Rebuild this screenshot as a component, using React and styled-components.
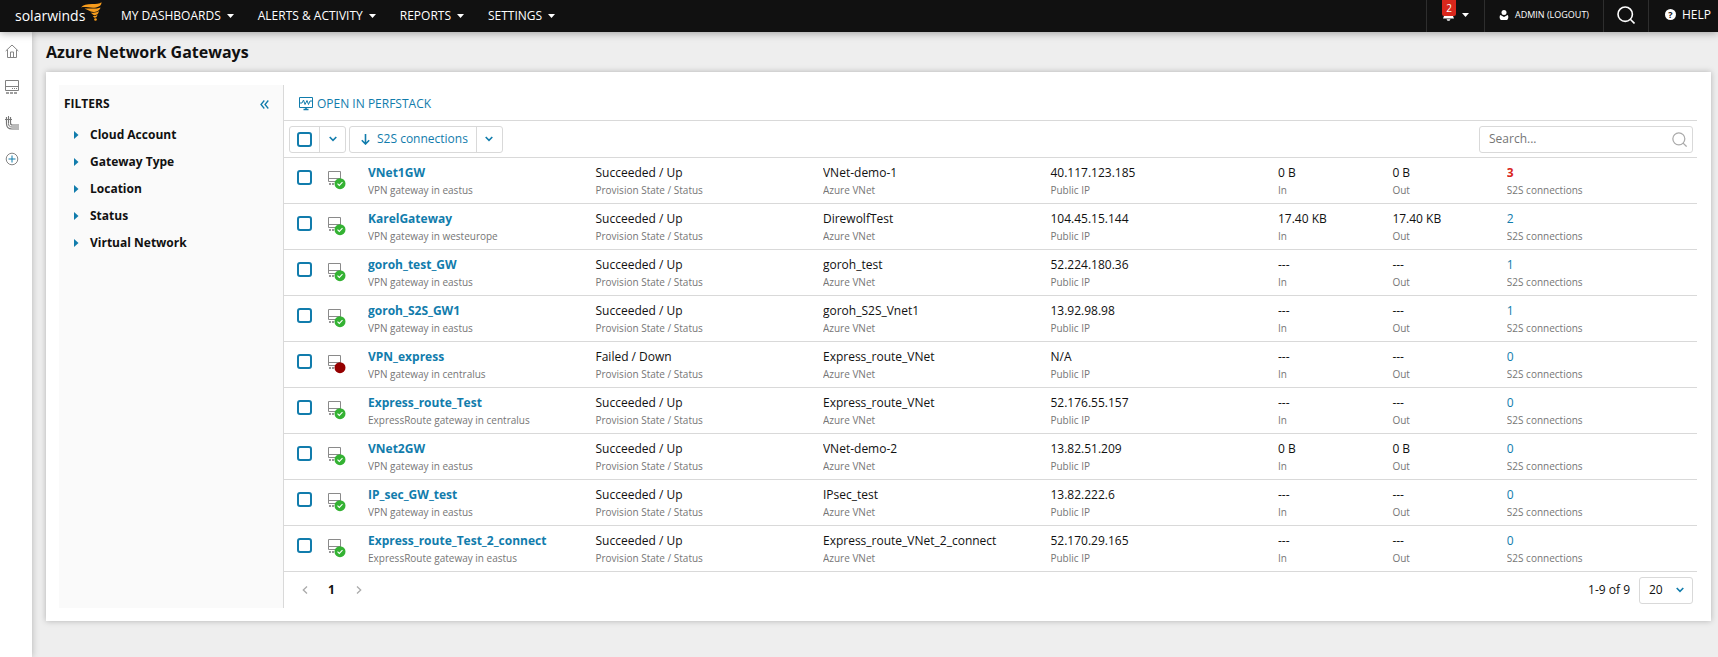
import React from 'react'
import styled, { createGlobalStyle } from 'styled-components'

const colors = {
  black: '#111',
  blue: '#117cac',
  green: '#34b233',
  down: '#950000',
  red: '#d9271c',
  line: '#d9d9d9',
  muted: '#767676',
  text: '#111',
}

const gateways = [
  { name: 'VNet1GW', kind: 'VPN gateway in eastus', state: 'Succeeded / Up', vnet: 'VNet-demo-1', ip: '40.117.123.185', in: '0 B', out: '0 B', s2s: 3, alert: true },
  { name: 'KarelGateway', kind: 'VPN gateway in westeurope', state: 'Succeeded / Up', vnet: 'DirewolfTest', ip: '104.45.15.144', in: '17.40 KB', out: '17.40 KB', s2s: 2 },
  { name: 'goroh_test_GW', kind: 'VPN gateway in eastus', state: 'Succeeded / Up', vnet: 'goroh_test', ip: '52.224.180.36', in: '---', out: '---', s2s: 1 },
  { name: 'goroh_S2S_GW1', kind: 'VPN gateway in eastus', state: 'Succeeded / Up', vnet: 'goroh_S2S_Vnet1', ip: '13.92.98.98', in: '---', out: '---', s2s: 1 },
  { name: 'VPN_express', kind: 'VPN gateway in centralus', state: 'Failed / Down', vnet: 'Express_route_VNet', ip: 'N/A', in: '---', out: '---', s2s: 0, down: true },
  { name: 'Express_route_Test', kind: 'ExpressRoute gateway in centralus', state: 'Succeeded / Up', vnet: 'Express_route_VNet', ip: '52.176.55.157', in: '---', out: '---', s2s: 0 },
  { name: 'VNet2GW', kind: 'VPN gateway in eastus', state: 'Succeeded / Up', vnet: 'VNet-demo-2', ip: '13.82.51.209', in: '0 B', out: '0 B', s2s: 0 },
  { name: 'IP_sec_GW_test', kind: 'VPN gateway in eastus', state: 'Succeeded / Up', vnet: 'IPsec_test', ip: '13.82.222.6', in: '---', out: '---', s2s: 0 },
  { name: 'Express_route_Test_2_connect', kind: 'ExpressRoute gateway in eastus', state: 'Succeeded / Up', vnet: 'Express_route_VNet_2_connect', ip: '52.170.29.165', in: '---', out: '---', s2s: 0 },
]

const menus = ['MY DASHBOARDS', 'ALERTS & ACTIVITY', 'REPORTS', 'SETTINGS']
const filters = ['Cloud Account', 'Gateway Type', 'Location', 'Status', 'Virtual Network']

const GlobalStyle = createGlobalStyle`
  * {
    box-sizing: border-box;
  }

  body {
    background: #eee;
    color: ${colors.text};
    font: 12px/18px "Open Sans", "Noto Sans", sans-serif;
    margin: 0;
  }

  button, input, select {
    color: inherit;
    font: inherit;
    margin: 0;
  }

  button {
    background: none;
    border: 0;
    cursor: pointer;
    padding: 0;
  }

  a {
    color: ${colors.blue};
    text-decoration: none;
  }

  svg {
    display: block;
    flex: none;
  }
`

const Page = styled.div`
  display: flex;
  flex-direction: column;
  min-height: 100vh;
`

const TopBar = styled.header`
  background: ${colors.black};
  box-shadow: 0 1px 8px rgba(0, 0, 0, 0.35);
  color: #fff;
  display: flex;
  height: 32px;
  justify-content: space-between;
  position: relative;
  z-index: 2;
`

const Brand = styled.a`
  color: #fff;
  display: flex;
  font-size: 14px;
  line-height: 32px;
  padding-left: 15px;
  width: 109px;

  > svg {
    margin: 2px 0 0 -4px;
  }
`

const Menu = styled.nav`
  display: flex;
  flex: 1;
`

const MenuButton = styled.button`
  align-items: center;
  display: flex;
  gap: 6px;
  height: 31px;
  padding: 0 12px;
`

const Tools = styled.div`
  display: flex;
`

const Tool = styled.button`
  align-items: center;
  border-left: 1px solid #2e2e2e;
  display: flex;
  font-size: ${(props) => (props.$small ? '9px' : '12px')};
  gap: 6px;
  padding: 0 ${(props) => props.$pad}px 3px;
`

const BellBox = styled.span`
  align-items: center;
  align-self: flex-start;
  display: flex;
  flex-direction: column;
`

const Count = styled.span`
  background: ${colors.red};
  border-radius: 0 0 2px 2px;
  font-size: 10px;
  line-height: 16px;
  text-align: center;
  width: 14px;
`

const Body = styled.div`
  display: flex;
  flex: 1;
`

const Rail = styled.nav`
  background: #fff;
  box-shadow: 0 0 7px rgba(0, 0, 0, 0.25);
  display: flex;
  flex-direction: column;
  gap: 22px;
  padding: 12px 0 0 5px;
  width: 32px;
`

const RailButton = styled.button`
  height: 14px;
  width: 14px;
`

const Main = styled.main`
  flex: 1;
  min-width: 0;
  padding: 0 7px 36px 14px;
`

const Title = styled.h1`
  font-size: 16px;
  font-weight: 700;
  line-height: 40px;
  margin: 0;
`

const Card = styled.section`
  background: #fff;
  box-shadow: 0 0 6px rgba(0, 0, 0, 0.25);
  display: flex;
  padding: 13px 14px 13px 13px;
`

const Filters = styled.aside`
  background: #fafafa;
  border-right: 1px solid ${colors.line};
  flex: none;
  width: 225px;
`

const FiltersHead = styled.div`
  align-items: center;
  display: flex;
  justify-content: space-between;
  padding: 10px 14px 8px 5px;
`

const FiltersTitle = styled.h2`
  font-size: 12px;
  font-weight: 700;
  line-height: 18px;
  margin: 0;
`

const FilterButton = styled.button`
  align-items: center;
  display: flex;
  font-weight: 700;
  gap: 11px;
  height: 27px;
  padding-left: 15px;
  width: 100%;
`

const Content = styled.div`
  flex: 1;
  min-width: 0;
`

const ActionBar = styled.div`
  border-bottom: 1px solid ${colors.line};
  display: flex;
  height: 36px;
  padding: 2px 0 0 15px;
`

const ActionButton = styled.button`
  align-items: center;
  color: ${colors.blue};
  display: flex;
  gap: 4px;
`

const ToolRow = styled.div`
  align-items: center;
  border-bottom: ${(props) => (props.$lined ? `1px solid ${colors.line}` : '0')};
  display: flex;
  gap: 3px;
  height: ${(props) => (props.$lined ? '37px' : '36px')};
  padding: 0 4px 0 5px;
`

const Split = styled.div`
  border: 1px solid ${colors.line};
  border-radius: 3px;
  color: ${colors.blue};
  display: flex;
  height: 27px;
`

const SplitPart = styled.label`
  align-items: center;
  display: flex;
  padding: 0 7px;
`

const SplitButton = styled.button`
  align-items: center;
  display: flex;
  gap: 7px;
  padding: 0 8px 0 11px;
`

const SplitArrow = styled.button`
  align-items: center;
  border-left: 1px solid ${colors.line};
  display: flex;
  justify-content: center;
  width: 26px;
`

const CheckBox = styled.input.attrs({ type: 'checkbox' })`
  appearance: none;
  background: #fff;
  border: 2px solid ${colors.blue};
  border-radius: 3px;
  display: block;
  height: 15px;
  width: 15px;
`

const SearchBox = styled.label`
  align-items: center;
  border: 1px solid ${colors.line};
  border-radius: 3px;
  color: #aaa;
  display: flex;
  height: 27px;
  margin-left: auto;
  padding: 0 5px 0 9px;
  width: 214px;
`

const SearchInput = styled.input`
  background: none;
  border: 0;
  color: ${colors.text};
  flex: 1;
  min-width: 0;
  outline: none;
  padding: 0;

  &::placeholder {
    color: ${colors.muted};
    opacity: 1;
  }
`

const Table = styled.table`
  border-collapse: separate;
  border-spacing: 0;
  table-layout: fixed;
  width: 100%;
`

const Column = styled.col`
  width: ${(props) => props.$width};
`

const Cell = styled.td`
  border-bottom: 1px solid ${colors.line};
  height: 46px;
  overflow: hidden;
  padding: 6px 0 5px;
  vertical-align: top;
  white-space: nowrap;
`

const ControlCell = styled(Cell)`
  padding: 12px 0 0 13px;
`

const IconCell = styled(Cell)`
  padding: 12px 0 0;
`

const Value = styled.div`
  line-height: 18px;
`

const NameLink = styled.a`
  font-weight: 700;
`

const CountLink = styled.a`
  color: ${(props) => (props.$alert ? colors.red : colors.blue)};
  font-weight: ${(props) => (props.$alert ? 700 : 400)};
`

const Caption = styled.div`
  color: ${colors.muted};
  font-size: 10px;
  line-height: 16px;
`

const Pager = styled.nav`
  display: flex;
  padding-left: 2px;
`

const PageButton = styled.button`
  align-items: center;
  color: ${(props) => (props.$current ? colors.text : '#aaa')};
  display: flex;
  font-weight: 700;
  height: 27px;
  justify-content: center;
  width: 27px;
`

const Range = styled.span`
  margin-left: auto;
`

const SizeBox = styled.label`
  align-items: center;
  border: 1px solid ${colors.line};
  border-radius: 3px;
  color: ${colors.blue};
  display: grid;
  height: 27px;
  margin-left: 6px;
  width: 54px;

  > * {
    grid-area: 1 / 1;
  }

  > svg {
    justify-self: end;
    margin-right: 8px;
    pointer-events: none;
  }
`

const SizeSelect = styled.select`
  appearance: none;
  background: none;
  border: 0;
  color: ${colors.text};
  height: 25px;
  outline: none;
  padding: 0 9px;
  width: 100%;
`

const HelpMark = styled.span`
  background: #fff;
  border-radius: 50%;
  color: ${colors.black};
  font-size: 9px;
  font-weight: 700;
  height: 11px;
  line-height: 11px;
  margin-left: 9px;
  text-align: center;
  width: 11px;
`

function Caret () {
  return <svg width="7" height="4" fill="#fff"><path d="M0 0h7L3.500 4z" /></svg>
}

function Chevron () {
  return (
    <svg width="8" height="6" fill="none" stroke="currentColor" strokeWidth="1.600">
      <path d="M.7 1 4 4.300 7.300 1" />
    </svg>
  )
}

function PageArrow ({ next }) {
  return (
    <svg width="6" height="8" fill="none" stroke="currentColor" strokeWidth="1.300">
      <path d={next ? 'M1 .5 4.700 4 1 7.500' : 'M5 .5 1.300 4 5 7.500'} />
    </svg>
  )
}

function Magnifier ({ size, weight }) {
  return (
    <svg width={size} height={size} viewBox="0 0 18 18" fill="none" stroke="currentColor" strokeWidth={weight}>
      <circle cx="8.200" cy="8.200" r="7.200" />
      <path d="m13.300 13.300 4.200 4.200" />
    </svg>
  )
}

function LogoMark () {
  return (
    <svg width="22" height="20" viewBox="0 0 22 20" fill="#f99d1c">
      <path d="M0 5.500C2 2.800 6 2 11 2 15 2 18.500 1.800 20.500.3c.2 3-2.500 5-7 5.400C8.500 6.100 4 4.300 0 5.500z" />
      <path d="M3.500 6.700C8 6 14 7.600 19.500 5.400c-.8 3.300-4 4.500-7.300 4.500C8.800 9.900 6.700 7.400 3.500 6.700z" />
      <path d="M9.500 10.600c3 .4 6.500.2 8.500-1.500-.4 3-2.300 4.200-4.700 4.100-1.600-.1-2.500-1.700-3.800-2.600z" />
      <path d="M11.500 13.800c1.800.4 3.600.1 4.900-1-.2 2-1.300 3-2.700 2.900-.9-.1-1.400-1.100-2.200-1.900z" />
      <circle cx="14.500" cy="17.500" r="1.300" />
    </svg>
  )
}

function HomeIcon () {
  return (
    <svg width="14" height="14" fill="none" stroke="#858585">
      <path d="M.7 7 7 1l6.300 6M2.500 5.800v7.700h9V5.800M5.500 13.500V8h3v5.500" />
    </svg>
  )
}

function DeviceIcon () {
  return (
    <svg width="14" height="15" fill="none" stroke="#808080">
      <path d="M.5.5h13v10H.5zM.5 6.500h13" />
      <path d="M7 8.500h5" strokeDasharray="1 1" />
      <path d="M1 13h12" strokeWidth="1.400" strokeDasharray="3 1" />
    </svg>
  )
}

function RouteIcon () {
  return (
    <svg width="14" height="14" fill="none" stroke="#777">
      <path d="M1.500 1v6.500c0 3.500 2 5.500 5.500 5.500h7" strokeWidth="1.200" />
      <path d="M3.500 0v7.500C3.500 9.800 4.700 11 7 11h7" />
      <path d="M5.500 1v6c0 1.300.7 2 2 2H14" strokeWidth="1.200" />
      <path d="M0 3.500h7" />
    </svg>
  )
}

function PlusIcon () {
  return (
    <svg width="14" height="14" fill="none">
      <circle cx="7" cy="7" r="5.800" stroke="#858585" />
      <path d="M3.500 7h7M7 3.500v7" stroke={colors.blue} />
    </svg>
  )
}

function PerfIcon () {
  return (
    <svg width="14" height="14" fill="none" stroke={colors.blue}>
      <path d="M.5.5h13v10H.5z" />
      <path d="M1 6h2l1.500-3L6 7.500l2-4 1.500 4L11 4h2" />
      <path d="M7 10v2M4.500 12.500h5" strokeWidth="1.600" />
    </svg>
  )
}

function GatewayIcon ({ down }) {
  return (
    <svg width="18" height="20" fill="none" role="img" aria-label={down ? 'Down' : 'Up'}>
      <path d="M.5 1.500h12v10H.5zM.5 8.500h12" stroke="#8a8a8a" />
      <path d="M1 14h8" stroke="#777" strokeWidth="1.300" strokeDasharray="2 1" />
      <circle cx="12" cy="13.700" r="5.500" fill={down ? colors.down : colors.green} />
      {!down && <path d="m9.500 13.700 1.800 1.700 3.200-3.200" stroke="#fff" strokeWidth="1.100" />}
    </svg>
  )
}

function Header () {
  return (
    <TopBar>
      <Brand href="#home">solarwinds<LogoMark /></Brand>
      <Menu>
        {menus.map((menu) => (
          <MenuButton key={menu}>{menu}<Caret /></MenuButton>
        ))}
      </Menu>
      <Tools>
        <Tool $pad={15}>
          <BellBox>
            <Count>2</Count>
            <svg width="11" height="5" fill="#fff">
              <path d="M1 0h9l1 2.500H0zM3.500 3.200h4L6.500 4.800h-2z" />
            </svg>
          </BellBox>
          <Caret />
        </Tool>
        <Tool $small $pad={14}>
          <svg width="10" height="10" fill="#fff">
            <circle cx="5" cy="2.600" r="2.500" />
            <path d="M1.500 5 5 7l3.500-2C9.600 5.500 9.800 9 8 10H2C.2 9 .4 5.500 1.500 5z" />
          </svg>
          ADMIN (LOGOUT)
        </Tool>
        <Tool $pad={13} aria-label="Search">
          <Magnifier size={18} weight={1.6} />
        </Tool>
        <Tool $pad={7}>
          <HelpMark>?</HelpMark>
          HELP
        </Tool>
      </Tools>
    </TopBar>
  )
}

function FilterPanel () {
  return (
    <Filters>
      <FiltersHead>
        <FiltersTitle>FILTERS</FiltersTitle>
        <button aria-label="Collapse filters">
          <svg width="9" height="9" fill="none" stroke={colors.blue} strokeWidth="1.300">
            <path d="M4.300.5 1 4.500l3.300 4M8.300.5 5 4.500l3.300 4" />
          </svg>
        </button>
      </FiltersHead>
      {filters.map((filter) => (
        <FilterButton key={filter}>
          <svg width="5" height="8" fill={colors.blue}><path d="M0 0v8l4.500-4z" /></svg>
          {filter}
        </FilterButton>
      ))}
    </Filters>
  )
}

function Field ({ caption, children }) {
  return (
    <Cell>
      <Value>{children}</Value>
      <Caption>{caption}</Caption>
    </Cell>
  )
}

function GatewayRow ({ gateway }) {
  return (
    <tr>
      <ControlCell><CheckBox aria-label={gateway.name} /></ControlCell>
      <IconCell><GatewayIcon down={gateway.down} /></IconCell>
      <Field caption={gateway.kind}><NameLink href="#gateway">{gateway.name}</NameLink></Field>
      <Field caption="Provision State / Status">{gateway.state}</Field>
      <Field caption="Azure VNet">{gateway.vnet}</Field>
      <Field caption="Public IP">{gateway.ip}</Field>
      <Field caption="In">{gateway.in}</Field>
      <Field caption="Out">{gateway.out}</Field>
      <Field caption="S2S connections">
        <CountLink href="#connections" $alert={gateway.alert}>{gateway.s2s}</CountLink>
      </Field>
    </tr>
  )
}

function App () {
  return (
    <Page>
      <GlobalStyle />
      <Header />
      <Body>
        <Rail>
          <RailButton aria-label="Home"><HomeIcon /></RailButton>
          <RailButton aria-label="Devices"><DeviceIcon /></RailButton>
          <RailButton aria-label="Routes"><RouteIcon /></RailButton>
          <RailButton aria-label="Add"><PlusIcon /></RailButton>
        </Rail>
        <Main>
          <Title>Azure Network Gateways</Title>
          <Card>
            <FilterPanel />
            <Content>
              <ActionBar>
                <ActionButton><PerfIcon />OPEN IN PERFSTACK</ActionButton>
              </ActionBar>
              <ToolRow $lined>
                <Split>
                  <SplitPart><CheckBox aria-label="Select all" /></SplitPart>
                  <SplitArrow aria-label="Selection options"><Chevron /></SplitArrow>
                </Split>
                <Split>
                  <SplitButton>
                    <svg width="9" height="11" fill="none" stroke="currentColor" strokeWidth="1.600">
                      <path d="M4.500 0v10M.8 6.300l3.700 3.700 3.700-3.700" />
                    </svg>
                    S2S connections
                  </SplitButton>
                  <SplitArrow aria-label="Sort options"><Chevron /></SplitArrow>
                </Split>
                <SearchBox>
                  <SearchInput placeholder="Search..." aria-label="Search gateways" />
                  <Magnifier size={15} weight={1.5} />
                </SearchBox>
              </ToolRow>
              <Table>
                <colgroup>
                  <Column $width="44px" />
                  <Column $width="40px" />
                  <Column $width="16.1%" />
                  <Column $width="16.1%" />
                  <Column $width="16.1%" />
                  <Column $width="16.1%" />
                  <Column $width="8.1%" />
                  <Column $width="8.1%" />
                  <Column />
                </colgroup>
                <tbody>
                  {gateways.map((gateway) => (
                    <GatewayRow key={gateway.name} gateway={gateway} />
                  ))}
                </tbody>
              </Table>
              <ToolRow>
                <Pager aria-label="Pages">
                  <PageButton aria-label="Previous page"><PageArrow /></PageButton>
                  <PageButton $current>1</PageButton>
                  <PageButton aria-label="Next page"><PageArrow next /></PageButton>
                </Pager>
                <Range>1-9 of 9</Range>
                <SizeBox>
                  <SizeSelect aria-label="Rows per page" defaultValue="20">
                    <option>10</option>
                    <option>20</option>
                    <option>50</option>
                  </SizeSelect>
                  <Chevron />
                </SizeBox>
              </ToolRow>
            </Content>
          </Card>
        </Main>
      </Body>
    </Page>
  )
}

export default App
